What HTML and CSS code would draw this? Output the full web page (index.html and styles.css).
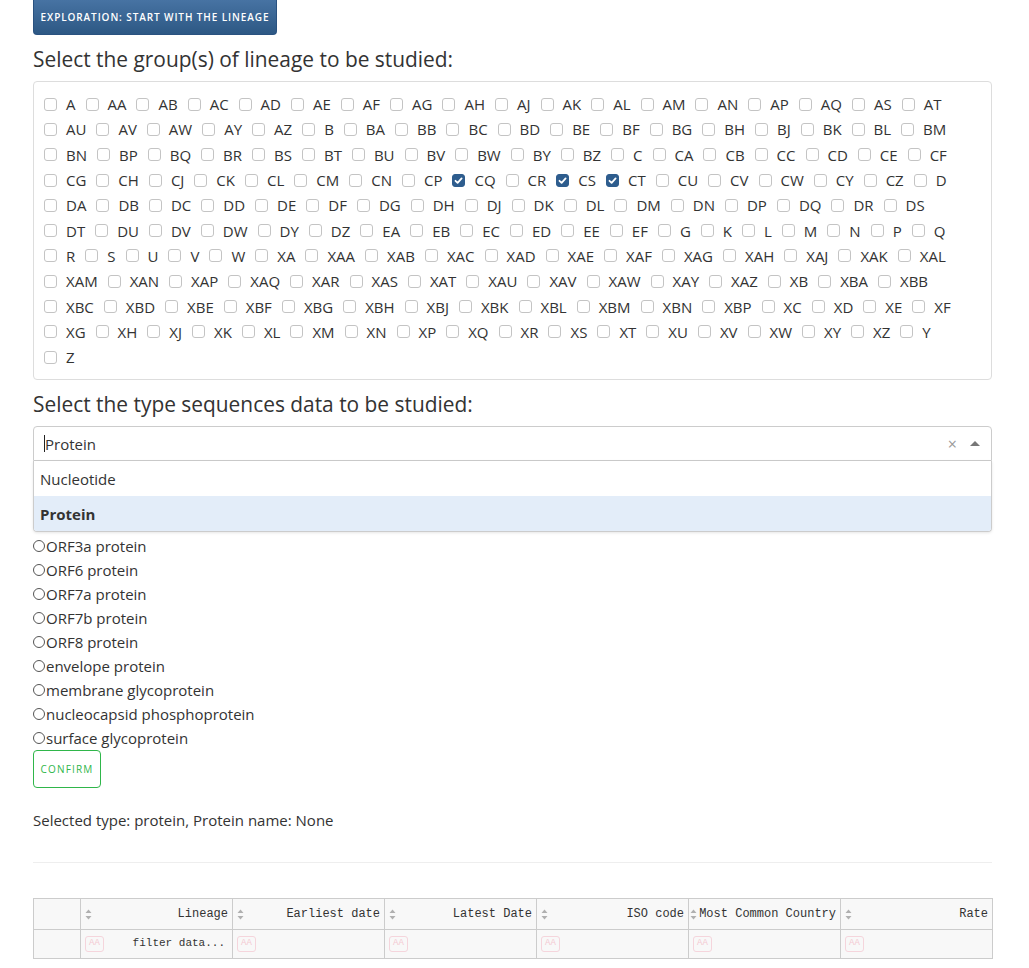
FILE: index.html
```html
<!DOCTYPE html>
<html>
<head>
<meta charset="utf-8">
<link rel="stylesheet" href="styles.css">
</head>
<body>
<div class="page">
  <button class="btn-explore">EXPLORATION: START WITH THE LINEAGE</button>
  <h3 class="title">Select the group(s) of lineage to be studied:</h3>
  <div class="well">
    <label class="cbi"><span class="cb"></span>A</label>
    <label class="cbi"><span class="cb"></span>AA</label>
    <label class="cbi"><span class="cb"></span>AB</label>
    <label class="cbi"><span class="cb"></span>AC</label>
    <label class="cbi"><span class="cb"></span>AD</label>
    <label class="cbi"><span class="cb"></span>AE</label>
    <label class="cbi"><span class="cb"></span>AF</label>
    <label class="cbi"><span class="cb"></span>AG</label>
    <label class="cbi"><span class="cb"></span>AH</label>
    <label class="cbi"><span class="cb"></span>AJ</label>
    <label class="cbi"><span class="cb"></span>AK</label>
    <label class="cbi"><span class="cb"></span>AL</label>
    <label class="cbi"><span class="cb"></span>AM</label>
    <label class="cbi"><span class="cb"></span>AN</label>
    <label class="cbi"><span class="cb"></span>AP</label>
    <label class="cbi"><span class="cb"></span>AQ</label>
    <label class="cbi"><span class="cb"></span>AS</label>
    <label class="cbi"><span class="cb"></span>AT</label>
    <label class="cbi"><span class="cb"></span>AU</label>
    <label class="cbi"><span class="cb"></span>AV</label>
    <label class="cbi"><span class="cb"></span>AW</label>
    <label class="cbi"><span class="cb"></span>AY</label>
    <label class="cbi"><span class="cb"></span>AZ</label>
    <label class="cbi"><span class="cb"></span>B</label>
    <label class="cbi"><span class="cb"></span>BA</label>
    <label class="cbi"><span class="cb"></span>BB</label>
    <label class="cbi"><span class="cb"></span>BC</label>
    <label class="cbi"><span class="cb"></span>BD</label>
    <label class="cbi"><span class="cb"></span>BE</label>
    <label class="cbi"><span class="cb"></span>BF</label>
    <label class="cbi"><span class="cb"></span>BG</label>
    <label class="cbi"><span class="cb"></span>BH</label>
    <label class="cbi"><span class="cb"></span>BJ</label>
    <label class="cbi"><span class="cb"></span>BK</label>
    <label class="cbi"><span class="cb"></span>BL</label>
    <label class="cbi"><span class="cb"></span>BM</label>
    <label class="cbi"><span class="cb"></span>BN</label>
    <label class="cbi"><span class="cb"></span>BP</label>
    <label class="cbi"><span class="cb"></span>BQ</label>
    <label class="cbi"><span class="cb"></span>BR</label>
    <label class="cbi"><span class="cb"></span>BS</label>
    <label class="cbi"><span class="cb"></span>BT</label>
    <label class="cbi"><span class="cb"></span>BU</label>
    <label class="cbi"><span class="cb"></span>BV</label>
    <label class="cbi"><span class="cb"></span>BW</label>
    <label class="cbi"><span class="cb"></span>BY</label>
    <label class="cbi"><span class="cb"></span>BZ</label>
    <label class="cbi"><span class="cb"></span>C</label>
    <label class="cbi"><span class="cb"></span>CA</label>
    <label class="cbi"><span class="cb"></span>CB</label>
    <label class="cbi"><span class="cb"></span>CC</label>
    <label class="cbi"><span class="cb"></span>CD</label>
    <label class="cbi"><span class="cb"></span>CE</label>
    <label class="cbi"><span class="cb"></span>CF</label>
    <label class="cbi"><span class="cb"></span>CG</label>
    <label class="cbi"><span class="cb"></span>CH</label>
    <label class="cbi"><span class="cb"></span>CJ</label>
    <label class="cbi"><span class="cb"></span>CK</label>
    <label class="cbi"><span class="cb"></span>CL</label>
    <label class="cbi"><span class="cb"></span>CM</label>
    <label class="cbi"><span class="cb"></span>CN</label>
    <label class="cbi"><span class="cb"></span>CP</label>
    <label class="cbi"><span class="cb on"><svg viewBox="0 0 13 13" width="13" height="13"><path d="M3.5 6.8 L5.6 8.8 L9.6 4.4" fill="none" stroke="#fff" stroke-width="1.8" stroke-linecap="round" stroke-linejoin="round"/></svg></span>CQ</label>
    <label class="cbi"><span class="cb"></span>CR</label>
    <label class="cbi"><span class="cb on"><svg viewBox="0 0 13 13" width="13" height="13"><path d="M3.5 6.8 L5.6 8.8 L9.6 4.4" fill="none" stroke="#fff" stroke-width="1.8" stroke-linecap="round" stroke-linejoin="round"/></svg></span>CS</label>
    <label class="cbi"><span class="cb on"><svg viewBox="0 0 13 13" width="13" height="13"><path d="M3.5 6.8 L5.6 8.8 L9.6 4.4" fill="none" stroke="#fff" stroke-width="1.8" stroke-linecap="round" stroke-linejoin="round"/></svg></span>CT</label>
    <label class="cbi"><span class="cb"></span>CU</label>
    <label class="cbi"><span class="cb"></span>CV</label>
    <label class="cbi"><span class="cb"></span>CW</label>
    <label class="cbi"><span class="cb"></span>CY</label>
    <label class="cbi"><span class="cb"></span>CZ</label>
    <label class="cbi"><span class="cb"></span>D</label>
    <label class="cbi"><span class="cb"></span>DA</label>
    <label class="cbi"><span class="cb"></span>DB</label>
    <label class="cbi"><span class="cb"></span>DC</label>
    <label class="cbi"><span class="cb"></span>DD</label>
    <label class="cbi"><span class="cb"></span>DE</label>
    <label class="cbi"><span class="cb"></span>DF</label>
    <label class="cbi"><span class="cb"></span>DG</label>
    <label class="cbi"><span class="cb"></span>DH</label>
    <label class="cbi"><span class="cb"></span>DJ</label>
    <label class="cbi"><span class="cb"></span>DK</label>
    <label class="cbi"><span class="cb"></span>DL</label>
    <label class="cbi"><span class="cb"></span>DM</label>
    <label class="cbi"><span class="cb"></span>DN</label>
    <label class="cbi"><span class="cb"></span>DP</label>
    <label class="cbi"><span class="cb"></span>DQ</label>
    <label class="cbi"><span class="cb"></span>DR</label>
    <label class="cbi"><span class="cb"></span>DS</label>
    <label class="cbi"><span class="cb"></span>DT</label>
    <label class="cbi"><span class="cb"></span>DU</label>
    <label class="cbi"><span class="cb"></span>DV</label>
    <label class="cbi"><span class="cb"></span>DW</label>
    <label class="cbi"><span class="cb"></span>DY</label>
    <label class="cbi"><span class="cb"></span>DZ</label>
    <label class="cbi"><span class="cb"></span>EA</label>
    <label class="cbi"><span class="cb"></span>EB</label>
    <label class="cbi"><span class="cb"></span>EC</label>
    <label class="cbi"><span class="cb"></span>ED</label>
    <label class="cbi"><span class="cb"></span>EE</label>
    <label class="cbi"><span class="cb"></span>EF</label>
    <label class="cbi"><span class="cb"></span>G</label>
    <label class="cbi"><span class="cb"></span>K</label>
    <label class="cbi"><span class="cb"></span>L</label>
    <label class="cbi"><span class="cb"></span>M</label>
    <label class="cbi"><span class="cb"></span>N</label>
    <label class="cbi"><span class="cb"></span>P</label>
    <label class="cbi"><span class="cb"></span>Q</label>
    <label class="cbi"><span class="cb"></span>R</label>
    <label class="cbi"><span class="cb"></span>S</label>
    <label class="cbi"><span class="cb"></span>U</label>
    <label class="cbi"><span class="cb"></span>V</label>
    <label class="cbi"><span class="cb"></span>W</label>
    <label class="cbi"><span class="cb"></span>XA</label>
    <label class="cbi"><span class="cb"></span>XAA</label>
    <label class="cbi"><span class="cb"></span>XAB</label>
    <label class="cbi"><span class="cb"></span>XAC</label>
    <label class="cbi"><span class="cb"></span>XAD</label>
    <label class="cbi"><span class="cb"></span>XAE</label>
    <label class="cbi"><span class="cb"></span>XAF</label>
    <label class="cbi"><span class="cb"></span>XAG</label>
    <label class="cbi"><span class="cb"></span>XAH</label>
    <label class="cbi"><span class="cb"></span>XAJ</label>
    <label class="cbi"><span class="cb"></span>XAK</label>
    <label class="cbi"><span class="cb"></span>XAL</label>
    <label class="cbi"><span class="cb"></span>XAM</label>
    <label class="cbi"><span class="cb"></span>XAN</label>
    <label class="cbi"><span class="cb"></span>XAP</label>
    <label class="cbi"><span class="cb"></span>XAQ</label>
    <label class="cbi"><span class="cb"></span>XAR</label>
    <label class="cbi"><span class="cb"></span>XAS</label>
    <label class="cbi"><span class="cb"></span>XAT</label>
    <label class="cbi"><span class="cb"></span>XAU</label>
    <label class="cbi"><span class="cb"></span>XAV</label>
    <label class="cbi"><span class="cb"></span>XAW</label>
    <label class="cbi"><span class="cb"></span>XAY</label>
    <label class="cbi"><span class="cb"></span>XAZ</label>
    <label class="cbi"><span class="cb"></span>XB</label>
    <label class="cbi"><span class="cb"></span>XBA</label>
    <label class="cbi"><span class="cb"></span>XBB</label>
    <label class="cbi"><span class="cb"></span>XBC</label>
    <label class="cbi"><span class="cb"></span>XBD</label>
    <label class="cbi"><span class="cb"></span>XBE</label>
    <label class="cbi"><span class="cb"></span>XBF</label>
    <label class="cbi"><span class="cb"></span>XBG</label>
    <label class="cbi"><span class="cb"></span>XBH</label>
    <label class="cbi"><span class="cb"></span>XBJ</label>
    <label class="cbi"><span class="cb"></span>XBK</label>
    <label class="cbi"><span class="cb"></span>XBL</label>
    <label class="cbi"><span class="cb"></span>XBM</label>
    <label class="cbi"><span class="cb"></span>XBN</label>
    <label class="cbi"><span class="cb"></span>XBP</label>
    <label class="cbi"><span class="cb"></span>XC</label>
    <label class="cbi"><span class="cb"></span>XD</label>
    <label class="cbi"><span class="cb"></span>XE</label>
    <label class="cbi"><span class="cb"></span>XF</label>
    <label class="cbi"><span class="cb"></span>XG</label>
    <label class="cbi"><span class="cb"></span>XH</label>
    <label class="cbi"><span class="cb"></span>XJ</label>
    <label class="cbi"><span class="cb"></span>XK</label>
    <label class="cbi"><span class="cb"></span>XL</label>
    <label class="cbi"><span class="cb"></span>XM</label>
    <label class="cbi"><span class="cb"></span>XN</label>
    <label class="cbi"><span class="cb"></span>XP</label>
    <label class="cbi"><span class="cb"></span>XQ</label>
    <label class="cbi"><span class="cb"></span>XR</label>
    <label class="cbi"><span class="cb"></span>XS</label>
    <label class="cbi"><span class="cb"></span>XT</label>
    <label class="cbi"><span class="cb"></span>XU</label>
    <label class="cbi"><span class="cb"></span>XV</label>
    <label class="cbi"><span class="cb"></span>XW</label>
    <label class="cbi"><span class="cb"></span>XY</label>
    <label class="cbi"><span class="cb"></span>XZ</label>
    <label class="cbi"><span class="cb"></span>Y</label>
    <label class="cbi"><span class="cb"></span>Z</label>
  </div>

  <h3 class="title">Select the type sequences data to be studied:</h3>
  <div class="selectize">
    <div class="sel-input">
      <span class="sel-value"><span class="caret-cursor"></span>Protein</span>
      <span class="sel-clear">×</span>
      <span class="sel-arrow"></span>
    </div>
    <div class="sel-dropdown">
      <div class="opt">Nucleotide</div>
      <div class="opt active">Protein</div>
    </div>
  </div>

  <div class="radios">
    <label class="radio"><span class="rc"></span>ORF3a protein</label>
    <label class="radio"><span class="rc"></span>ORF6 protein</label>
    <label class="radio"><span class="rc"></span>ORF7a protein</label>
    <label class="radio"><span class="rc"></span>ORF7b protein</label>
    <label class="radio"><span class="rc"></span>ORF8 protein</label>
    <label class="radio"><span class="rc"></span>envelope protein</label>
    <label class="radio"><span class="rc"></span>membrane glycoprotein</label>
    <label class="radio"><span class="rc"></span>nucleocapsid phosphoprotein</label>
    <label class="radio"><span class="rc"></span>surface glycoprotein</label>
  </div>
  <button class="btn-confirm">CONFIRM</button>

  <p class="selected">Selected type: protein, Protein name: None</p>
  <hr class="sep">

  <table class="dt">
    <colgroup>
      <col class="c0"><col class="c1"><col class="c1"><col class="c1"><col class="c1"><col class="c1"><col class="c1">
    </colgroup>
    <thead>
      <tr class="hrow">
        <th></th>
        <th><svg class="sort" viewBox="0 0 7 11" width="7" height="11"><path d="M3.5 0.5 L6.5 4 H0.5Z M0.5 7 H6.5 L3.5 10.5Z" fill="#b0b0b0"/></svg>Lineage</th>
        <th><svg class="sort" viewBox="0 0 7 11" width="7" height="11"><path d="M3.5 0.5 L6.5 4 H0.5Z M0.5 7 H6.5 L3.5 10.5Z" fill="#b0b0b0"/></svg>Earliest date</th>
        <th><svg class="sort" viewBox="0 0 7 11" width="7" height="11"><path d="M3.5 0.5 L6.5 4 H0.5Z M0.5 7 H6.5 L3.5 10.5Z" fill="#b0b0b0"/></svg>Latest Date</th>
        <th><svg class="sort" viewBox="0 0 7 11" width="7" height="11"><path d="M3.5 0.5 L6.5 4 H0.5Z M0.5 7 H6.5 L3.5 10.5Z" fill="#b0b0b0"/></svg>ISO code</th>
        <th class="tight"><svg class="sort" viewBox="0 0 7 11" width="7" height="11"><path d="M3.5 0.5 L6.5 4 H0.5Z M0.5 7 H6.5 L3.5 10.5Z" fill="#b0b0b0"/></svg>Most Common Country</th>
        <th><svg class="sort" viewBox="0 0 7 11" width="7" height="11"><path d="M3.5 0.5 L6.5 4 H0.5Z M0.5 7 H6.5 L3.5 10.5Z" fill="#b0b0b0"/></svg>Rate</th>
      </tr>
      <tr class="frow">
        <td></td>
        <td><span class="aa">AA</span><span class="ph">filter data...</span></td>
        <td><span class="aa">AA</span></td>
        <td><span class="aa">AA</span></td>
        <td><span class="aa">AA</span></td>
        <td><span class="aa">AA</span></td>
        <td><span class="aa">AA</span></td>
      </tr>
    </thead>
  </table>
</div>
</body>
</html>
```

FILE: styles.css
```css
* { box-sizing: border-box; }

body {
  margin: 0;
  font-family: "Open Sans", "DejaVu Sans", sans-serif;
  font-size: 15px;
  color: #333;
  background: #fff;
}

.page {
  padding: 0 37px 0 33px;
}

.btn-explore {
  display: block;
  width: 244px;
  height: 35px;
  border: 1px solid #2a5280;
  border-top: none;
  border-radius: 0 0 4px 4px;
  background: linear-gradient(#4773a3, #2d5884);
  color: #fff;
  font-family: "Open Sans", sans-serif;
  font-size: 10px;
  font-weight: 600;
  letter-spacing: 0.9px;
  padding: 0;
  text-align: center;
}

.title {
  font-size: 20.9px;
  font-weight: 400;
  line-height: 23px;
  margin: 13px 0 10px;
  color: #333;
}

.well {
  border: 1px solid #ddd;
  border-radius: 4px;
  padding: 9.5px 20px 9.5px 10px;
  display: flex;
  flex-wrap: wrap;
  column-gap: 10px;
}

.cbi {
  display: inline-flex;
  align-items: center;
  height: 25.3px;
  color: #333;
  font-size: 15px;
}

.cb {
  display: inline-block;
  width: 13px;
  height: 13px;
  border: 1px solid #c4c4c4;
  border-radius: 3px;
  margin-right: 9px;
  background: #fff;
}

.cb.on {
  background: #2e5d8e;
  border-color: #2e5d8e;
}

.cb.on svg {
  display: block;
  margin: -1px;
}

.selectize {
  margin-bottom: 2px;
}

.sel-input {
  height: 35px;
  border: 1px solid #ccc;
  border-radius: 4px 4px 0 0;
  display: flex;
  align-items: center;
  padding: 0 11px 0 10px;
}

.sel-value {
  flex: 1;
  display: flex;
  align-items: center;
}

.caret-cursor {
  display: inline-block;
  width: 1px;
  height: 17px;
  background: #222;
}

.sel-clear {
  color: #999;
  font-size: 16px;
  margin-right: 13px;
  line-height: 1;
}

.sel-arrow {
  width: 0;
  height: 0;
  border-left: 5px solid transparent;
  border-right: 5px solid transparent;
  border-bottom: 5px solid #777;
}

.sel-dropdown {
  border: 1px solid #ccc;
  border-top: none;
  border-radius: 0 0 4px 4px;
  box-shadow: 0 1px 3px rgba(0,0,0,0.1);
  overflow: hidden;
}

.opt {
  height: 35px;
  line-height: 36px;
  padding-left: 6px;
  color: #333;
}

.opt.active {
  background: #e3edf9;
  font-weight: 700;
}

.radios {
  display: flex;
  flex-direction: column;
}

.radio {
  display: flex;
  align-items: center;
  height: 24px;
  color: #333;
}

.rc {
  display: inline-block;
  width: 12px;
  height: 12px;
  border: 1px solid #555;
  border-radius: 50%;
  margin-right: 1px;
}

.btn-confirm {
  display: block;
  width: 68px;
  height: 38px;
  border: 1px solid #2fb64a;
  border-radius: 4px;
  background: #fff;
  color: #2fb64a;
  font-family: "Open Sans", sans-serif;
  font-size: 10px;
  letter-spacing: 1.2px;
  padding: 0;
}

.selected {
  margin: 22px 0 0;
  line-height: 20px;
}

.sep {
  border: none;
  border-top: 1px solid #eee;
  margin: 32px 0 35px;
}

.dt {
  width: 960px;
  border-collapse: collapse;
  table-layout: fixed;
  font-family: "Liberation Mono", "Courier New", monospace;
  font-size: 12px;
  color: #333;
  background: #f8f8f8;
}

.c0 { width: 47px; }
.c1 { width: 152px; }

.dt th, .dt td {
  border: 1px solid #ccc;
  padding: 0 4px;
  text-align: right;
  white-space: nowrap;
  font-weight: 400;
}

.hrow th {
  height: 31px;
}

.frow td {
  height: 29px;
}

.sort {
  float: left;
  display: block;
  margin-top: 2px;
}

.tight { padding-left: 1px !important; }

.aa {
  float: left;
  width: 19px;
  height: 16px;
  border: 1.5px solid #f5d5dc;
  border-radius: 3px;
  color: #f4c9d2;
  font-size: 9px;
  line-height: 13px;
  text-align: center;
  margin-top: 0;
}

.ph {
  color: #333;
  font-size: 11px;
  padding-right: 3px;
}
```
